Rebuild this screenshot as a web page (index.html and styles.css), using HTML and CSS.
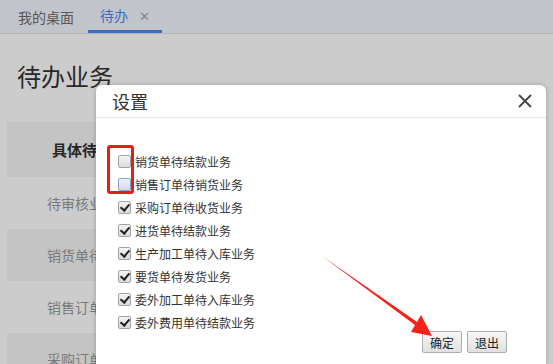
FILE: index.html
```html
<!DOCTYPE html>
<html>
<head>
  <title>待办</title>
  <meta charset="utf-8">
  <link rel="stylesheet" href="styles.css">
</head>
<body>
  <div class="tabs">
    <div class="tab">我的桌面</div>
    <div class="tab active">待办 <span class="tab-close">✕</span></div>
  </div>

  <div class="page">
    <h1>待办业务</h1>
    <div class="table">
      <div class="row head">具体待办业务</div>
      <div class="row">待审核业务</div>
      <div class="row alt">销货单待结款业务</div>
      <div class="row">销售订单待销货业务</div>
      <div class="row alt">采购订单待收货业务</div>
    </div>
  </div>

  <div class="mask"></div>

  <div class="dialog">
    <div class="dialog-head">
      <span class="dialog-title">设置</span>
      <span class="dialog-close">
        <svg width="14" height="14" viewBox="0 0 14 14"><path d="M1 1L13 13M13 1L1 13" stroke="#444" stroke-width="1.8" fill="none"/></svg>
      </span>
    </div>
    <div class="dialog-body">
      <label class="opt"><span class="box"></span>销货单待结款业务</label>
      <label class="opt"><span class="box hover"></span>销售订单待销货业务</label>
      <label class="opt"><span class="box on"></span>采购订单待收货业务</label>
      <label class="opt"><span class="box on"></span>进货单待结款业务</label>
      <label class="opt"><span class="box on"></span>生产加工单待入库业务</label>
      <label class="opt"><span class="box on"></span>要货单待发货业务</label>
      <label class="opt"><span class="box on"></span>委外加工单待入库业务</label>
      <label class="opt"><span class="box on"></span>委外费用单待结款业务</label>
      <div class="dialog-foot">
        <button>确定</button>
        <button>退出</button>
      </div>
    </div>
  </div>

  <div class="mark"></div>
  <svg class="arrow" width="553" height="364" viewBox="0 0 553 364">
    <polygon points="322,256 417,322 421,315 432,336 411,332 415,325" fill="#f5221b"/>
  </svg>
</body>
</html>
```

FILE: styles.css
```css
* { margin: 0; padding: 0; box-sizing: border-box; }
body { width: 553px; height: 364px; overflow: hidden; background: #fff; font-family: "Microsoft YaHei", "Noto Sans CJK SC", sans-serif; color: #333; position: relative; }

.tabs { height: 34px; background: #f3f6ff; border-bottom: 1px solid #e2e2e2; display: flex; padding-left: 18px; }
.tab { font-size: 14px; line-height: 34px; color: #6e6e6e; margin-right: 14px; }
.tab.active { color: #4b87f2; border-bottom: 3px solid #4b87f2; line-height: 31px; padding: 0 12px; }
.tab-close { color: #aaa; font-size: 13px; margin-left: 8px; }

.page { padding: 24px 7px 0; height: 330px; overflow: hidden; }
h1 { font-size: 24px; font-weight: normal; color: #333; line-height: 36px; margin-bottom: 28px; padding-left: 10px; }
.row { height: 52px; line-height: 52px; padding-left: 40px; font-size: 14px; color: #999; }
.row.head { height: 55px; line-height: 55px; background: #f6f6f6; font-weight: bold; color: #333; padding-left: 45px; font-size: 15px; }
.row.alt { background: #f6f6f6; }

.mask { position: absolute; inset: 0; background: rgba(0, 0, 0, .2); }

.dialog { position: absolute; left: 96px; top: 85px; width: 450px; bottom: 0; background: #fff; border-radius: 6px 6px 0 0; box-shadow: 0 0 4px rgba(0, 0, 0, .25); }
.dialog-head { height: 33px; border-bottom: 1px solid #e5e5e5; display: flex; align-items: center; justify-content: space-between; padding: 0 16px; }
.dialog-title { font-size: 18px; color: #333; }
.dialog-close { display: flex; margin-right: -2px; }

.dialog-body { padding: 32px 22px 0; position: relative; }
.opt { display: flex; align-items: center; height: 23px; font-size: 12px; color: #333; }
.box { width: 13px; height: 13px; border: 1px solid #a3a3a3; border-radius: 2px; background: linear-gradient(#f4f4f4, #dadada); margin-right: 4px; position: relative; }
.box.hover { border-color: #7ea6d8; background: linear-gradient(#eef3fa, #d4dbe5); }
.box.on::after { content: ""; position: absolute; left: 3px; top: 0px; width: 4px; height: 7px; border: solid #222; border-width: 0 2px 2px 0; transform: rotate(40deg); }

.dialog-foot { display: flex; justify-content: flex-end; gap: 5px; margin: -3px 17px 0 0; }
.dialog-foot button { width: 40px; height: 22px; font-size: 12px; font-family: inherit; color: #222; border: 1px solid #adadad; border-radius: 2px; background: linear-gradient(#f6f6f6, #e1e1e1); }

.mark { position: absolute; left: 107px; top: 145px; width: 27px; height: 49px; border: 3px solid #e81d18; border-radius: 3px; }
.arrow { position: absolute; left: 0; top: 0; }
```
